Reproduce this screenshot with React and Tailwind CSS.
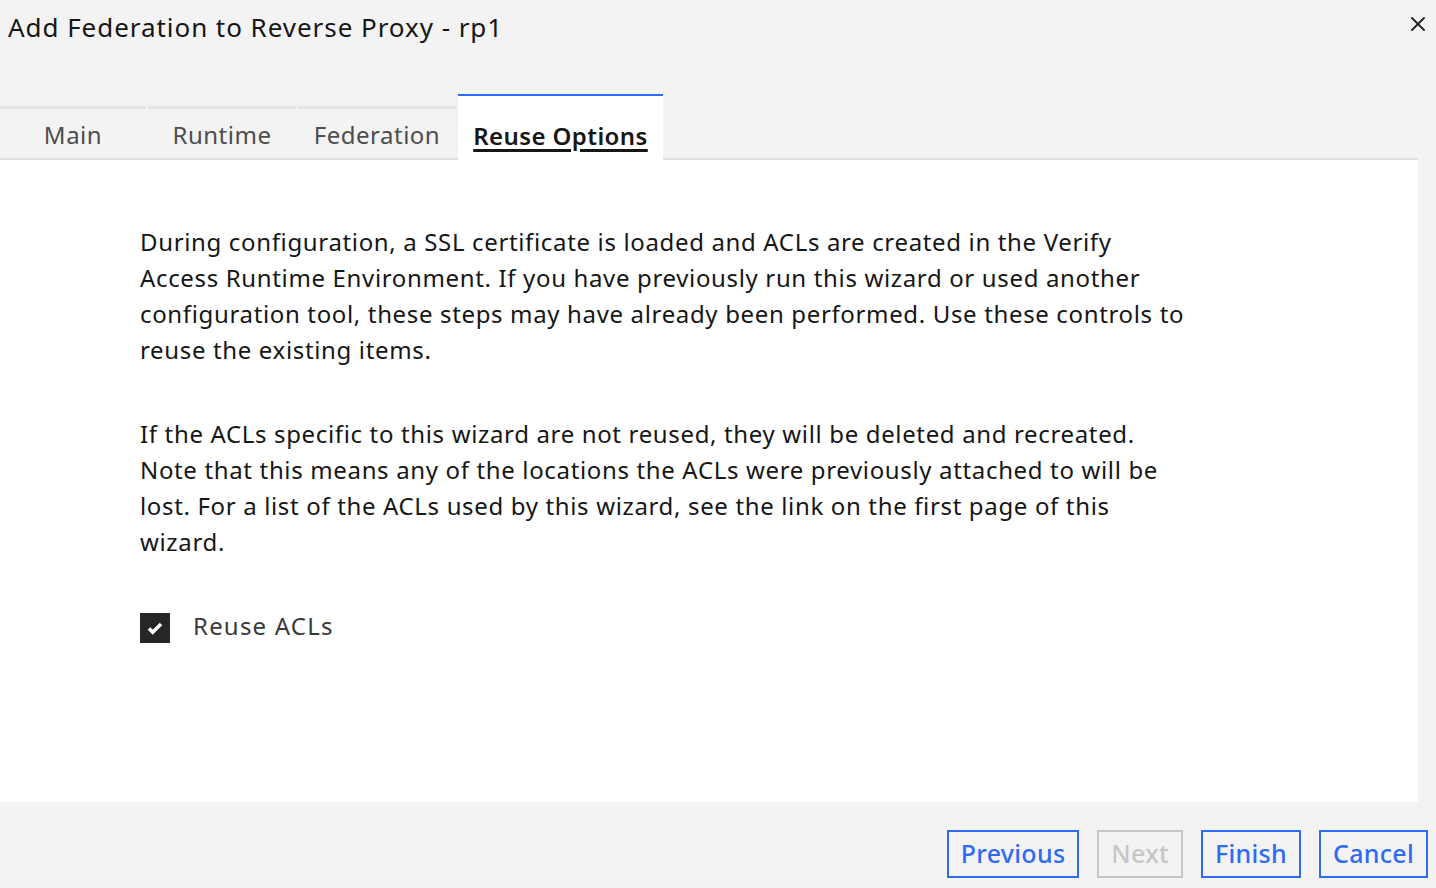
import { X } from 'lucide-react'

const FONT = { fontFamily: '"Noto Sans", "Open Sans", sans-serif' }

const TABS = [
  { label: 'Main', width: 'w-[146px]' },
  { label: 'Runtime', width: 'w-[148px]' },
  { label: 'Federation', width: 'w-[158px]' },
]

function Tab({ label, width }) {
  return (
    <div className={`${width} h-[52px] mr-[2px] pt-[3px] border-t-[3px] border-[#e4e4e4] bg-[#f3f3f3] flex items-center justify-center text-[24px] tracking-[0.5px] text-[#4d4d4d]`}>
      {label}
    </div>
  )
}

function Button({ children, disabled }) {
  return (
    <button
      className={`h-[48px] px-[12px] border-2 text-[25px] font-medium tracking-[0.3px] bg-[#f3f3f3] ${
        disabled ? 'border-[#c6c6c6] text-[#c6c6c6]' : 'border-[#2f6af5] text-[#2f6af5]'
      }`}
    >
      {children}
    </button>
  )
}

export default function App() {
  return (
    <div className="w-[1436px] h-[888px] bg-[#f3f3f3] flex flex-col overflow-hidden" style={FONT}>
      {/* Header */}
      <div className="h-[94px] relative">
        <h1 className="pl-[8px] pt-[9px] text-[26px] tracking-[0.95px] leading-[36px] text-[#161616]">
          Add Federation to Reverse Proxy - rp1
        </h1>
        <button className="absolute right-[6px] top-[12px] text-[#262626]">
          <X size={24} strokeWidth={2} />
        </button>
      </div>

      {/* Tabs */}
      <div className="h-[66px] w-[1418px] flex items-end border-b-2 border-[#e0e0e0]">
        {TABS.map((t) => (
          <Tab key={t.label} {...t} />
        ))}
        <div className="w-[205px] h-[66px] -mb-[2px] pt-[15px] bg-white border-t-2 border-[#2f6af5] flex items-center justify-center text-[24px] tracking-[0.4px] font-semibold text-[#161616] underline underline-offset-[4px] decoration-[3px]">
          Reuse Options
        </div>
      </div>

      {/* Content */}
      <div className="w-[1418px] h-[642px] bg-white pl-[140px] pt-[64px] text-[24px] tracking-[0.65px] leading-[36px] text-[#161616]">
        <p className="w-[1056px]">
          During configuration, a SSL certificate is loaded and ACLs are created in the Verify Access Runtime
          Environment. If you have previously run this wizard or used another configuration tool, these steps may
          have already been performed. Use these controls to reuse the existing items.
        </p>
        <p className="w-[1056px] mt-[48px]">
          If the ACLs specific to this wizard are not reused, they will be deleted and recreated. Note that this
          means any of the locations the ACLs were previously attached to will be lost. For a list of the ACLs used
          by this wizard, see the link on the first page of this wizard.
        </p>
        <label className="mt-[48px] flex items-center gap-[23px] text-[#393939] tracking-[1.2px]">
          <span className="w-[30px] h-[30px] mt-[4px] bg-[#262626] flex items-center justify-center">
            <svg width="20" height="20" viewBox="0 0 16 16" fill="none">
              <path d="M3.2 8.4l3 3 6.6-6.6" stroke="white" strokeWidth="2.8" />
            </svg>
          </span>
          Reuse ACLs
        </label>
      </div>

      {/* Footer */}
      <div className="flex-1 flex justify-end items-start pt-[28px] pr-[8px] gap-[18px]">
        <Button>Previous</Button>
        <Button disabled>Next</Button>
        <Button>Finish</Button>
        <Button>Cancel</Button>
      </div>
    </div>
  )
}
